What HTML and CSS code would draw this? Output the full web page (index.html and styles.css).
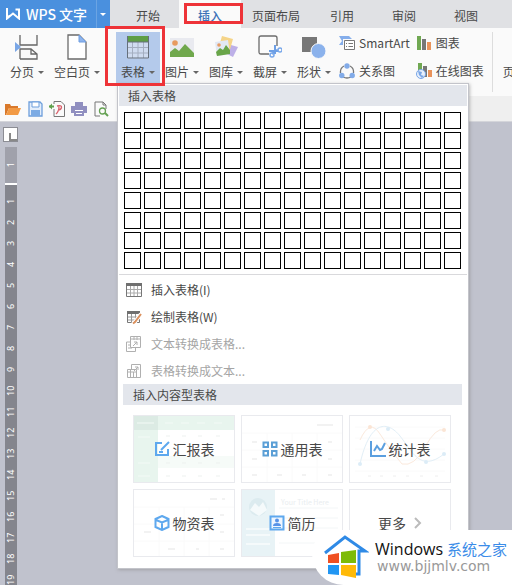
FILE: index.html
```html
<!DOCTYPE html>
<html lang="zh-CN">
<head>
<meta charset="utf-8">
<title>WPS 文字</title>
<link rel="stylesheet" href="styles.css">
</head>
<body>
<div class="app">
  <header class="titlebar">
    <button class="brand" type="button">
      <svg width="15" height="12" viewBox="0 0 15 12" fill="none" stroke="#fff" stroke-width="2"><path d="M1 0v10.500l6-5 6 5V1.500H9.500M1 10L4 7.500"/></svg>
      <span class="brand-name">WPS 文字</span>
      <span class="caret caret-light"></span>
    </button>
    <nav class="tabs">
      <a class="tab" href="#">开始</a>
      <a class="tab active" href="#">插入</a>
      <a class="tab wide" href="#">页面布局</a>
      <a class="tab" href="#">引用</a>
      <a class="tab" href="#">审阅</a>
      <a class="tab" href="#">视图</a>
    </nav>
  </header>

  <div class="ribbon">
    <div class="group first">
      <button class="tool" type="button">
        <svg width="24" height="26" viewBox="0 0 24 26" fill="none" stroke="#666" stroke-width="1.300"><path d="M5 1v10h17V1M5 25V15h11l6 5v5H5M16 15v5h6"/><path d="M0 8l6 5-6 5z" fill="#79a6e6" stroke="none"/></svg>
        <span class="label">分页<i class="caret"></i></span>
      </button>
      <button class="tool" type="button">
        <svg width="24" height="26" viewBox="0 0 24 26"><path d="M3 1h11l7 7v17H3z" fill="#fff" stroke="#6b6b6b" stroke-width="1.300"/><path d="M14 1v7h7z" fill="#8db4ee" stroke="#6f9de0"/></svg>
        <span class="label">空白页<i class="caret"></i></span>
      </button>
    </div>
    <div class="group">
      <button class="tool selected" type="button" aria-expanded="true">
        <svg width="24" height="26" viewBox="0 0 24 26"><path d="M1 2h22v22.500H1z" fill="#d0dcf0"/><path d="M1 2h22v6H1z" fill="#5f9e45"/><path d="M1 13.500h22M1 19h22M6.500 8v16M12 8v16M17.500 8v16" stroke="#a4aec0" fill="none"/><path d="M1.500 2v22h21V2M1 8h22" stroke="#66707c" fill="none"/></svg>
        <span class="label">表格<i class="caret"></i></span>
      </button>
      <button class="tool" type="button">
        <svg width="24" height="26" viewBox="0 0 24 26"><path d="M0 4h24v19H0z" fill="#e9eaf0"/><circle cx="5" cy="9" r="2.800" fill="#e79a60"/><path d="M0 23v-5l5-4 4 3 6-7 9 9v4z" fill="#70a84d"/></svg>
        <span class="label">图片<i class="caret"></i></span>
      </button>
      <button class="tool" type="button">
        <svg width="24" height="26" viewBox="0 0 24 26"><path d="M17 11l7 2-5 10-6-3z" fill="#bdb0e8"/><path d="M8 2l11 3-4 14-11-3z" fill="#f5d488"/><path d="M1 8l13-2 2 14-13 2z" fill="#e2e8f4"/><circle cx="5" cy="11" r="1.800" fill="#e89b64"/><path d="M2 18l4-4 3 2 3-5 4 5v4L3 22z" fill="#69a549"/></svg>
        <span class="label">图库<i class="caret"></i></span>
      </button>
      <button class="tool" type="button">
        <svg width="24" height="26" viewBox="0 0 24 26" fill="none"><path d="M11 20H3q-2 0-2-2V4q0-2 2-2h14q2 0 2 2v8" stroke="#6c6c6c" stroke-width="1.300"/><path d="M17 11v9M11 17h9M16 18l-2 2M18 16l2 1" stroke="#6d9fe5" stroke-width="2"/><circle cx="14" cy="21" r="2" stroke="#79a8ea" stroke-width="1.500"/><circle cx="22" cy="16" r="2" stroke="#79a8ea" stroke-width="1.500"/></svg>
        <span class="label">截屏<i class="caret"></i></span>
      </button>
      <button class="tool" type="button">
        <svg width="24" height="26" viewBox="0 0 24 26"><path d="M0 3h15v15H0z" fill="#777"/><circle cx="16.500" cy="17" r="7.500" fill="#8bb2ec" stroke="#fafafa"/></svg>
        <span class="label">形状<i class="caret"></i></span>
      </button>
    </div>
    <div class="group stack">
      <button class="mini" type="button">
        <svg width="16" height="16" viewBox="0 0 16 16"><path d="M0 1h10l3 3H4v6H0l3-4z" fill="#85aeeb"/><path d="M5.500 5.500h10v9h-10z" fill="#fff" stroke="#777"/><path d="M7 8.500h1M7 11.500h1M9.500 8.500H14M9.500 11.500H14" stroke="#777"/></svg>
        <span>SmartArt</span>
      </button>
      <button class="mini" type="button">
        <svg width="16" height="16" viewBox="0 0 16 16"><path d="M5 3Q1 5 1.500 10M11 3q4 2 3.500 7M4 14q4 2 8 0" fill="none" stroke="#777" stroke-width="1.300"/><g fill="#82abe8"><circle cx="8" cy="3" r="2.700"/><circle cx="2.800" cy="12.500" r="2.700"/><circle cx="13.200" cy="12.500" r="2.700"/></g></svg>
        <span>关系图</span>
      </button>
    </div>
    <div class="group stack last">
      <button class="mini" type="button">
        <svg width="16" height="16" viewBox="0 0 16 16"><path d="M1 1h4v14H1z" fill="#70a852"/><path d="M6 4h4v11H6z" fill="#777"/><path d="M11 7h4v8h-4z" fill="#e9935b"/></svg>
        <span>图表</span>
      </button>
      <button class="mini" type="button">
        <svg width="16" height="16" viewBox="0 0 16 16"><path d="M2 0h4v8H2z" fill="#70a852"/><path d="M7 3h4v11H7z" fill="#777"/><path d="M12 7h4v7h-4z" fill="#e9935b"/><circle cx="5" cy="11" r="4.500" fill="#e8f0fc" stroke="#79a6e6"/><path d="M2 8l4 1-1 3 3 1-2 2-3-3z" fill="#79a6e6"/></svg>
        <span>在线图表</span>
      </button>
    </div>
    <div class="group more"><span>页</span></div>
  </div>

  <div class="subbar">
    <div class="quick">
      <button type="button" aria-label="打开"><svg width="16" height="16" viewBox="0 0 16 16"><path d="M0 3h5l1 2h7v2H4L1 14H0z" fill="#d9792b"/><path d="M4 7h12l-3 7H1z" fill="#f29a45"/></svg></button>
      <button type="button" aria-label="保存"><svg width="16" height="16" viewBox="0 0 16 16"><path d="M2 1h11l2 2v12H2z" fill="#e4eefb" stroke="#6e9fdc" stroke-width="1.300"/><path d="M5 1h7v5H5z" fill="#fff" stroke="#6e9fdc"/><path d="M4 9h9v6H4z" fill="#7cabe4"/></svg></button>
      <button type="button" aria-label="输出为PDF"><svg width="16" height="16" viewBox="0 0 16 16" fill="none"><path d="M5 3V.5h7l3.500 3.500v11.500H5V8" stroke="#777"/><path d="M8 5q5-1 4.500 1.500T9 9M10 5.500q0 5-3 7.500" stroke="#d9636e" stroke-width="1.300"/><path d="M0 5.500h5" stroke="#5fa04d" stroke-width="2"/><path d="M0 5.500L3 2.500v6z" fill="#5fa04d"/></svg></button>
      <button type="button" aria-label="打印"><svg width="16" height="16" viewBox="0 0 16 16"><path d="M4 1h8v4H4zM0 5h16v7h-3v3H3v-3H0z" fill="#908fc0"/><path d="M4 9.500h8M5 12.500h6" stroke="#fff"/></svg></button>
      <button type="button" aria-label="打印预览"><svg width="16" height="16" viewBox="0 0 16 16" fill="none"><path d="M7 15H2V1h8l3 3v4M10 1v3h3" stroke="#777"/><circle cx="9.500" cy="10" r="3" stroke="#65a153" stroke-width="1.300"/><path d="M12 12l3 3" stroke="#65a153" stroke-width="2"/></svg></button>
    </div>
  </div>

  <main class="workspace">
    <button class="tabstop" type="button" aria-label="制表符"></button>
    <div class="ruler">
      <div class="margin"><span>1</span></div>
      <div class="scale" id="scale"></div>
    </div>
  </main>

  <section class="menu">
    <h2 class="band">插入表格</h2>
    <div class="cells" id="cells"></div>
    <div class="commands">
      <button type="button">
        <svg width="16" height="16" viewBox="0 0 16 16"><path d="M.5 1.500h15v13H.5z" fill="#fff" stroke="#777"/><path d="M0 1h16v3H0z" fill="#707070"/><path d="M1 7.500h14M1 11h14M4.500 4v10M8 4v10M11.500 4v10" stroke="#aaa"/></svg>
        <span>插入表格(I)</span>
      </button>
      <button type="button">
        <svg width="16" height="16" viewBox="0 0 16 16"><path d="M1.500 2.500h12v11h-12z" fill="#fff" stroke="#777"/><path d="M1 2h13v3H1z" fill="#707070"/><path d="M2 8h11M2 11h11M5.500 5v9M9.500 5v9" stroke="#999"/><path d="M15 5l-6 8-2 2" stroke="#fff" stroke-width="4"/><path d="M15 5l-6 8-2 1.500" stroke="#dc925f" stroke-width="2"/></svg>
        <span>绘制表格(W)</span>
      </button>
      <button type="button" disabled>
        <svg width="16" height="16" viewBox="0 0 16 16" fill="none" stroke="#b0b0b0"><path d="M4 6H.5v9.500h9V12M4.500.500h10v11h-10zM4 3h11M8 1v3M11 1v3"/><path d="M2 9h2M2 12h4M7 10l4-4M8 6h3v3" /></svg>
        <span>文本转换成表格...</span>
      </button>
      <button type="button" disabled>
        <svg width="16" height="16" viewBox="0 0 16 16" fill="none" stroke="#b0b0b0"><path d="M5.500 6V1.500h9v13H10M1.500 6.500h9v8h-9zM1 9h9M4.500 7v7M7.500 9v5"/><path d="M8 8l4-4M9 4h3v3"/></svg>
        <span>表格转换成文本...</span>
      </button>
    </div>
    <h2 class="band inner">插入内容型表格</h2>
    <div class="cards">
      <button class="card" type="button">
        <svg class="art" viewBox="0 0 100 66" preserveAspectRatio="none"><path d="M0 0h100v14H0zM0 14h24v52H0z" fill="#e8f5ee"/><path d="M0 0h24v14H0z" fill="#dcebe4"/><path d="M24 40h76v12H24z" fill="#f6fbf8"/><path d="M3 7h17M31 7h8M47 7h8M63 7h8M80 7h8M4 21h12M4 47h12M4 60h12" stroke="#f3faf6" stroke-width="1"/><path d="M32 20h4M48 20h4M64 20h4M82 20h4M32 47h4M48 47h4M64 47h4M82 47h4M32 60h4M48 60h4M64 60h4M82 60h4" stroke="#edf1ef"/></svg>
        <svg width="16" height="16" viewBox="0 0 16 16" fill="none" stroke="#5ea8ee" stroke-width="2"><path d="M8 2H2v12h12V8M7 9l8-8M5 11h4"/></svg>
        <span>汇报表</span>
      </button>
      <button class="card" type="button">
        <svg class="art" viewBox="0 0 100 66" preserveAspectRatio="none"><path d="M0 17h100M0 34h100M0 51h100M25 17v49M50 17v49M75 17v49" stroke="#fafafa"/><path d="M75 9h16M10 26h5M86 26h4M10 43h5M86 43h4M10 59h5M35 59h5M60 59h4M86 59h4" stroke="#f2f2f2" stroke-width="2"/></svg>
        <svg width="16" height="16" viewBox="0 0 16 16" fill="none" stroke="#5b9fd6" stroke-width="2"><path d="M1.500 1.500h4.500v4.500H1.500zM10 1.500h4.500v4.500H10zM1.500 10h4.500v4.500H1.500zM10 10h4.500v4.500H10z"/></svg>
        <span>通用表</span>
      </button>
      <button class="card" type="button">
        <svg class="art" viewBox="0 0 100 66" preserveAspectRatio="none" fill="none"><path d="M5 11h90M5 22h90M5 33h90M5 44h90M5 55h90" stroke="#fafafa"/><path d="M10 24Q20 2 30 18T52 48Q64 51 75 31T94 14" stroke="#fbe9dc"/><path d="M10 48C20 3 38 5 50 20S70 57 94 38" stroke="#e2eff7"/><g fill="#fbe5d5"><circle cx="20" cy="11" r="2"/><circle cx="94" cy="14" r="2"/></g><g fill="#dcecf7"><circle cx="38" cy="13" r="2"/><circle cx="10" cy="48" r="2"/><circle cx="76" cy="46" r="2"/><circle cx="94" cy="38" r="2"/></g><path d="M18 60h3M30 60h3M43 60h3M56 60h3M70 60h3M85 60h3" stroke="#eee"/></svg>
        <svg width="16" height="16" viewBox="0 0 16 16" fill="none" stroke="#5b9fdf" stroke-width="2"><path d="M1 0v15h15M4 10l3-5 3 4 2-1 3-6"/></svg>
        <span>统计表</span>
      </button>
      <button class="card" type="button">
        <svg class="art" viewBox="0 0 100 66" preserveAspectRatio="none"><path d="M0 17h100M0 34h100M0 51h100M25 17v49M50 17v49M75 17v49" stroke="#fafafa"/><path d="M76 9h7M88 9h3M10 42h7M86 25h4M86 42h4M34 59h7M62 59h3M86 59h4" stroke="#f2f2f2" stroke-width="2"/></svg>
        <svg width="16" height="16" viewBox="0 0 16 16" fill="none" stroke="#5ea8ee" stroke-width="2"><path d="M8 1l6.500 3v8L8 15l-6.500-3V4zM2 5l6 2.500L14 5M8 7.500V15"/></svg>
        <span>物资表</span>
      </button>
      <button class="card" type="button">
        <svg class="art" viewBox="0 0 100 66" preserveAspectRatio="none"><path d="M0 0h33v66H0z" fill="#e8f3f6"/><circle cx="16" cy="17" r="9" fill="#dcebef"/><path d="M8 20l5-7 4 4 4-5 4 8-8 6z" fill="#f5fafb"/><path d="M4 39h24M4 45h24M4 54h24" stroke="#f5fafb" stroke-width="2"/><path d="M37 18h59M37 28h59M37 38h59M37 53h59" stroke="#f3f6f7"/><text x="39" y="15" font-size="7" fill="#e9edef">Your Title Here</text></svg>
        <svg width="16" height="16" viewBox="0 0 16 16"><path d="M1.500 1.500h13v13h-13z" fill="#eef6ff" stroke="#5ea8ee" stroke-width="2"/><circle cx="8" cy="5.500" r="2" fill="#5793e8"/><path d="M4 11q0-3 4-3t4 3z" fill="#5793e8"/><path d="M4 12.500h8" stroke="#5ea8ee"/></svg>
        <span>简历</span>
      </button>
      <button class="card" type="button">
        <span>更多</span>
        <svg width="8" height="12" viewBox="0 0 8 12" fill="none" stroke="#bbb" stroke-width="2"><path d="M1 1l5 5-5 5"/></svg>
      </button>
    </div>
  </section>

  <div class="mark mark-tab"></div>
  <div class="mark mark-tool"></div>

  <aside class="site">
    <svg width="46" height="44" viewBox="0 0 46 44"><path d="M2 18L22 2l20 14h-6v23h-5" fill="none" stroke="#2f8ae6" stroke-width="3"/><path d="M5 20l11-2v10H5z" fill="#f05022"/><path d="M18 17l15-2v13H18z" fill="#7dbb08"/><path d="M5 30h11v10L5 39z" fill="#2196f3"/><path d="M18 30h15v13l-15-3z" fill="#ffba08"/></svg>
    <div class="site-text">
      <div class="site-name"><span>Windows</span><b>系统之家</b></div>
      <div class="site-url">www.bjjmlv.com</div>
    </div>
  </aside>
</div>
<script src="main.js"></script>
</body>
</html>
```
FILE: styles.css
```css
* { box-sizing: border-box; }

body {
  margin: 0;
  font: 12px/16px "Noto Sans CJK SC", sans-serif;
  color: #484848;
}

button {
  margin: 0;
  padding: 0;
  border: 0;
  background: none;
  font: inherit;
  color: inherit;
}

svg { display: block; flex: none; }

.app {
  position: relative;
  display: flex;
  flex-direction: column;
  min-height: 100vh;
  overflow: hidden;
  background: #c0c2cd;
}

.caret {
  flex: none;
  border: 3px solid transparent;
  border-top-color: #666;
  border-bottom: 0;
}
.caret-light { border-top-color: #fff; margin-left: auto; }

/* Title bar */
.titlebar {
  display: flex;
  gap: 7px;
  height: 28px;
  background: #e0e1e4;
}
.brand {
  display: flex;
  align-items: center;
  gap: 5px;
  width: 110px;
  padding: 0 4px 0 6px;
  background: linear-gradient(90deg, transparent 96px, #6ba4e3 96px, #6ba4e3 97px, transparent 97px), #4a90de;
  color: #fff;
}
.brand-name { font-size: 14px; font-weight: 500; white-space: nowrap; }
.tabs { display: flex; }
.tab {
  display: flex;
  align-items: center;
  padding: 4px 19px 0;
  color: #484848;
  text-decoration: none;
  white-space: nowrap;
}
.tab.wide { padding: 4px 11px 0; }
.tab.active { background: #fafafa; color: #3d73b8; font-weight: 500; }

/* Ribbon */
.ribbon {
  display: flex;
  height: 68px;
  padding-top: 4px;
  background: #fafafa;
  overflow: hidden;
}
.group { display: flex; flex: none; }
.group.first { padding: 0 11px 0 5px; }
.tool {
  display: flex;
  flex-direction: column;
  align-items: center;
  gap: 4px;
  height: 52px;
  padding: 2px 5px 0;
}
.tool.selected { background: #b4caeb; }
.label { display: flex; align-items: center; gap: 4px; }
.group.stack { flex-direction: column; gap: 12px; padding: 3px 0 0 3px; }
.group.stack.last { padding-left: 6px; }
.mini { display: flex; align-items: center; gap: 4px; height: 16px; }
.group.more {
  height: 60px;
  margin-left: 8px;
  padding: 32px 0 0 10px;
  border-left: 1px solid #ddd;
}

/* Quick access */
.subbar { display: flex; height: 26px; background: #efefef; border-bottom: 1px solid #d4d5da; }
.quick {
  display: flex;
  align-items: center;
  gap: 6px;
  width: 117px;
  padding-left: 5px;
  background: #fafafa;
}

/* Document area */
.workspace { flex: 1; padding: 5px 0 0 3px; }
.tabstop {
  display: block;
  width: 15px;
  height: 15px;
  padding: 5px 0 0 5px;
  border: 1px solid #8c8d94;
  background: #fff;
}
.tabstop::before {
  content: "";
  display: block;
  width: 6px;
  height: 6px;
  border: solid #888;
  border-width: 0 0 2px 2px;
}
.ruler {
  width: 12px;
  margin: 5px 0 0 2px;
  background: #84858d;
  color: #fff;
  font: 9px/12px "Noto Sans", sans-serif;
}
.margin {
  display: flex;
  align-items: center;
  height: 38px;
  background: #a0a1ab;
  border-bottom: 2px solid #fff;
}
.scale {
  display: grid;
  grid-auto-rows: 21px;
  height: 400px;
  padding-top: 6px;
  overflow: hidden;
}
.ruler span {
  display: block;
  width: 12px;
  writing-mode: vertical-rl;
  transform: rotate(180deg);
  text-align: center;
}

/* Drop-down */
.menu {
  position: absolute;
  top: 83px;
  left: 117px;
  width: 352px;
  padding: 1px 1px 11px;
  border: 1px solid #c3c4ca;
  background: #fff;
  box-shadow: 1px 1px 3px #8888;
}
.band {
  margin: 0;
  padding: 2px 9px;
  background: #e3e6ec;
  font-size: 12px;
  font-weight: 400;
  line-height: 17px;
}
.band.inner { margin: 0 5px 0 4px; padding: 2px 10px; line-height: 17px; }
.cells {
  display: grid;
  grid-template-columns: repeat(17, 17px);
  gap: 3px;
  padding: 6px 5px 5px;
  border-bottom: 1px solid #d9d9dc;
}
.cells button { height: 17px; border: 1px solid #000; background: #fff; }
.commands { display: flex; flex-direction: column; padding-top: 1px; }
.commands button {
  display: flex;
  align-items: center;
  gap: 9px;
  height: 27px;
  padding-left: 7px;
}
.commands button:disabled { color: #a5a5a5; }
.cards {
  display: grid;
  grid-template-columns: repeat(3, 102px);
  gap: 6px;
  padding: 10px 14px 0;
}
.card {
  position: relative;
  display: flex;
  align-items: center;
  justify-content: center;
  gap: 3px;
  height: 68px;
  border: 1px solid #e9eaee;
  background: #fff;
  font-size: 14px;
  line-height: 20px;
}
.card > * { position: relative; }
.card > .art { position: absolute; inset: 0; width: 100%; height: 100%; }
.card:last-child { gap: 8px; }

/* Highlight frames */
.mark { position: absolute; border: 3px solid #ee3338; }
.mark-tab { left: 184px; top: 3px; width: 59px; height: 21px; }
.mark-tool { left: 105px; top: 26px; width: 60px; height: 60px; }

/* Site badge */
.site {
  position: absolute;
  right: 0;
  bottom: 0;
  display: flex;
  gap: 6px;
  width: 200px;
  height: 55px;
  padding: 5px 0 0 11px;
  border-radius: 24px 0 0 32px;
  background: #fff;
}
.site-text { padding-top: 4px; white-space: nowrap; }
.site-name {
  display: flex;
  gap: 4px;
  font: 15px/20px "Open Sans", "Noto Sans CJK SC", sans-serif;
  color: #111;
}
.site-name span { font-size: 16px; }
.site-name b { font-weight: 400; color: #3b8ce8; }
.site-url { font: 14px/15px "DejaVu Sans", sans-serif; color: #999; padding-left: 2px; }
```
FILE: main.js
```js
const cells = document.getElementById("cells");
for (let row = 1; row <= 8; row++) {
  for (let col = 1; col <= 17; col++) {
    const cell = document.createElement("button");
    cell.type = "button";
    cell.setAttribute("aria-label", `${row} × ${col}`);
    cells.append(cell);
  }
}

const scale = document.getElementById("scale");
for (let n = 1; n <= 19; n++) {
  const mark = document.createElement("span");
  mark.textContent = n;
  scale.append(mark);
}
```
